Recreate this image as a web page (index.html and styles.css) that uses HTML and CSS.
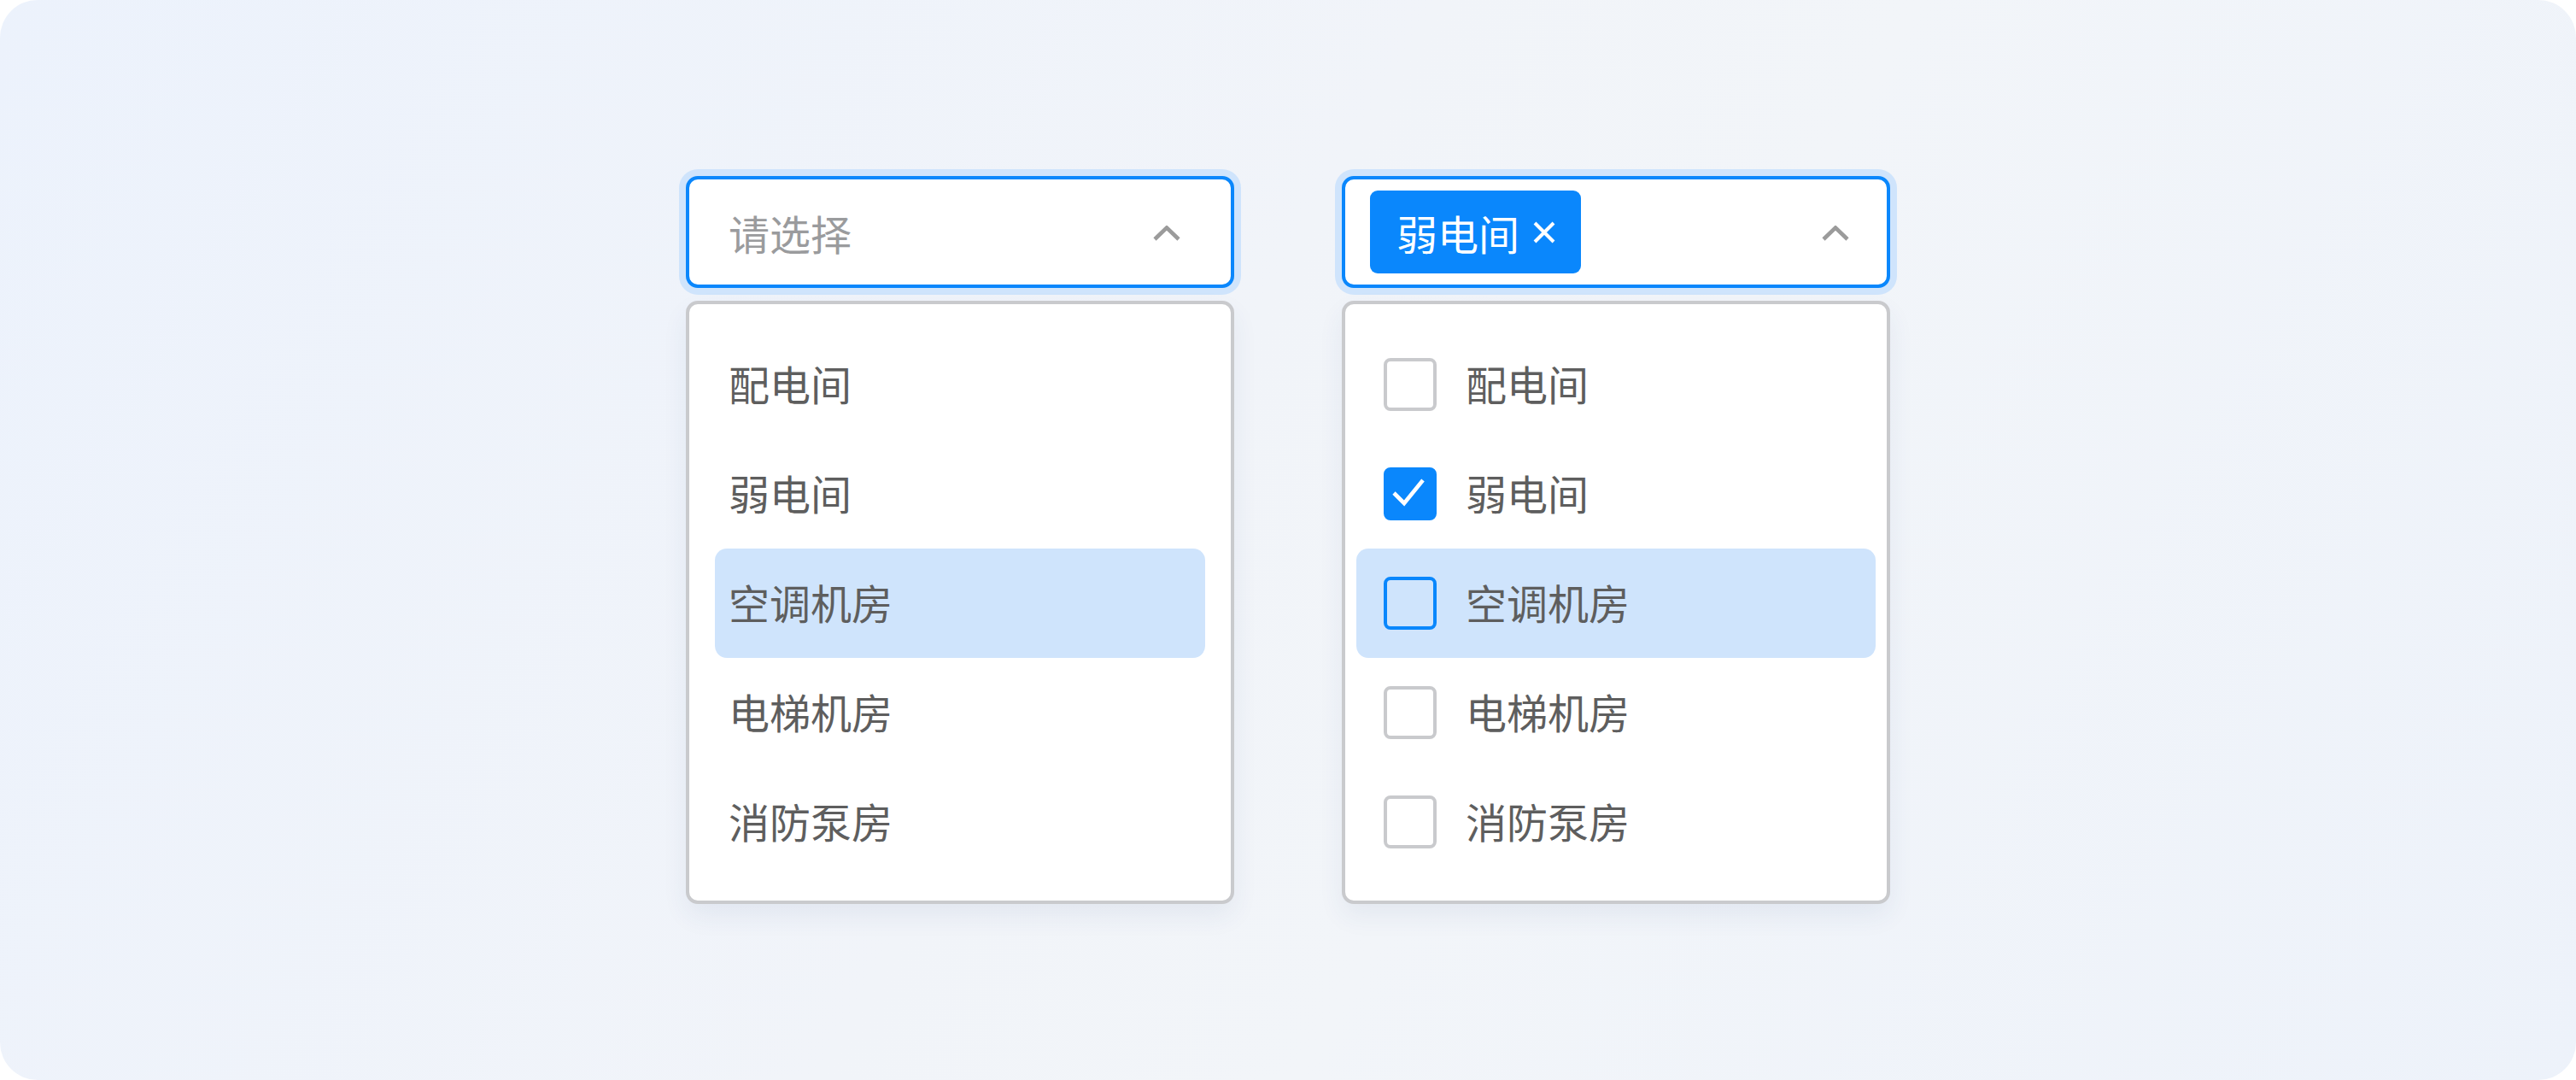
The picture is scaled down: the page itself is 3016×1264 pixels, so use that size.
FILE: index.html
```html
<!DOCTYPE html>
<html lang="zh-CN">
<head>
<meta charset="utf-8">
<title>Select</title>
<link rel="stylesheet" href="styles.css">
</head>
<body>
<div class="stage">
  <div class="column">
    <div class="select select-single">
      <span class="placeholder">请选择</span>
      <svg class="chevron" width="32" height="18" viewBox="0 0 32 18"><polyline points="2,16 16,2.5 30,16" fill="none" stroke="#9b9b9b" stroke-width="4.6"/></svg>
    </div>
    <div class="dropdown dropdown-single">
      <div class="option">配电间</div>
      <div class="option">弱电间</div>
      <div class="option hover">空调机房</div>
      <div class="option">电梯机房</div>
      <div class="option">消防泵房</div>
    </div>
  </div>
  <div class="column">
    <div class="select select-multi">
      <span class="tag">弱电间<svg class="tag-x" width="26" height="26" viewBox="0 0 26 26"><path d="M2 2L24 24M24 2L2 24" stroke="#fff" stroke-width="4" fill="none"/></svg></span>
      <svg class="chevron" width="32" height="18" viewBox="0 0 32 18"><polyline points="2,16 16,2.5 30,16" fill="none" stroke="#9b9b9b" stroke-width="4.6"/></svg>
    </div>
    <div class="dropdown dropdown-multi">
      <div class="option"><span class="box"></span>配电间</div>
      <div class="option"><span class="box checked"><svg width="62" height="62" viewBox="0 0 62 62"><polyline points="12,30 24,42 46,15" fill="none" stroke="#fff" stroke-width="4.6"/></svg></span>弱电间</div>
      <div class="option hover"><span class="box active"></span>空调机房</div>
      <div class="option"><span class="box"></span>电梯机房</div>
      <div class="option"><span class="box"></span>消防泵房</div>
    </div>
  </div>
</div>
</body>
</html>
```

FILE: styles.css
```css
html, body {
  margin: 0;
  padding: 0;
  background: #ffffff;
}
body {
  width: 3016px;
  height: 1264px;
  font-family: "Noto Sans CJK SC", "Noto Sans", sans-serif;
}
.stage {
  width: 3016px;
  height: 1264px;
  box-sizing: border-box;
  border-radius: 44px;
  background: linear-gradient(120deg, #ecf2fc 0%, #f1f4f9 45%, #f2f5f9 60%, #edf2fa 100%);
  display: flex;
  justify-content: center;
  align-items: center;
  gap: 126px;
}
.column {
  width: 642px;
  display: flex;
  flex-direction: column;
  gap: 15px;
}
.select {
  height: 131px;
  box-sizing: border-box;
  border: 4px solid #0a87fc;
  border-radius: 14px;
  background: #fff;
  box-shadow: 0 0 0 8px #cfe4fc;
  display: flex;
  align-items: center;
}
.select-single {
  padding: 0 59px 0 46px;
  justify-content: space-between;
}
.select-multi {
  padding: 0 44px 0 29px;
  justify-content: space-between;
}
.placeholder {
  font-size: 48px;
  line-height: 1;
  color: #9a9b9d;
}
.chevron {
  display: block;
  margin-top: 2px;
}
.tag {
  height: 97px;
  box-sizing: border-box;
  padding: 0 30px 0 31px;
  background: #0a87fc;
  border-radius: 9px;
  color: #fff;
  font-size: 48px;
  line-height: 1;
  display: flex;
  align-items: center;
}
.tag-x {
  display: block;
  margin-left: 16px;
}
.dropdown {
  box-sizing: border-box;
  border: 4px solid #c9cacd;
  border-radius: 14px;
  background: #fff;
  padding-top: 30px;
  padding-bottom: 28px;
  box-shadow: 0 14px 30px rgba(40, 70, 130, 0.07);
}
.dropdown-single {
  padding-left: 30px;
  padding-right: 30px;
}
.dropdown-multi {
  padding-left: 13px;
  padding-right: 13px;
}
.option {
  height: 128px;
  box-sizing: border-box;
  border-radius: 14px;
  display: flex;
  align-items: center;
  font-size: 48px;
  line-height: 1;
  color: #5e5e5e;
  padding-bottom: 5px;
}
.dropdown-single .option {
  padding-left: 16px;
}
.dropdown-multi .option {
  padding-left: 32px;
}
.option.hover {
  background: #cfe4fc;
}
.box {
  width: 62px;
  height: 62px;
  box-sizing: border-box;
  border: 4px solid #c9cacd;
  border-radius: 8px;
  margin-right: 34px;
  flex: none;
  position: relative;
  top: 2px;
}
.box.checked {
  background: #0a87fc;
  border-color: #0a87fc;
}
.box.checked svg {
  position: absolute;
  left: -4px;
  top: -4px;
}
.box.active {
  border-color: #0a87fc;
}
```
